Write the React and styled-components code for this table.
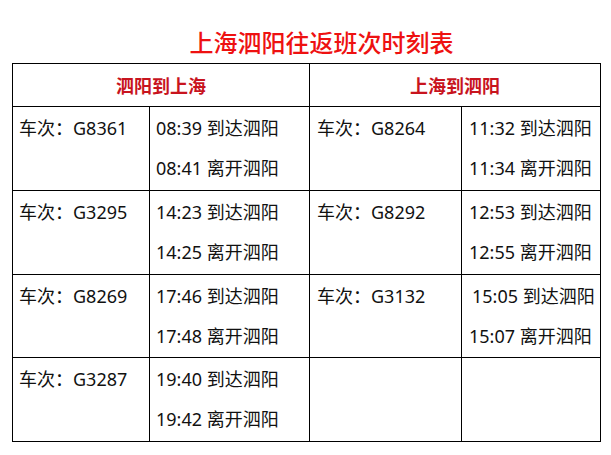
import React from "react";
import styled, { createGlobalStyle } from "styled-components";

const Global = createGlobalStyle`
  html, body { margin: 0; padding: 0; background: #fff; }
  body { font-family: "Noto Sans", "Noto Sans CJK SC", sans-serif; }
`;

const Page = styled.div`
  width: 611px;
  height: 455px;
  background: #fff;
  padding-top: 27px;
  box-sizing: border-box;
`;

const Title = styled.h1`
  margin: 0 0 6px 0;
  padding-left: 32px;
  text-align: center;
  font-family: "Noto Sans CJK SC", sans-serif;
  font-size: 24px;
  line-height: 30px;
  font-weight: 500;
  color: #ee1111;
  letter-spacing: 0;
`;

const Table = styled.div`
  margin-left: 12px;
  display: grid;
  grid-template-columns: 137px 160px 152px 139px;
  grid-template-rows: 43px 84px 84px 83px 84px;
  width: 588px;
  border-top: 1px solid #000;
  border-left: 1px solid #000;
`;

const Cell = styled.div`
  border-right: 1px solid #000;
  border-bottom: 1px solid #000;
  box-sizing: border-box;
  padding: 1px 0 0 ${(p) => p.$pad || 6}px;
  font-size: 18px;
  line-height: 40px;
  color: #111;
  white-space: nowrap;
`;

const HeadCell = styled.div`
  grid-column: span 2;
  border-right: 1px solid #000;
  border-bottom: 1px solid #000;
  display: flex;
  align-items: center;
  justify-content: center;
  font-family: "Noto Sans CJK SC", sans-serif;
  font-size: 18px;
  font-weight: 700;
  color: #c8141e;
`;

const Line = styled.div`
  padding-left: ${(p) => p.$indent || 0}px;
`;

const left = [
  ["G8361", "08:39", "08:41"],
  ["G3295", "14:23", "14:25"],
  ["G8269", "17:46", "17:48"],
  ["G3287", "19:40", "19:42"],
];
const right = [
  ["G8264", "11:32", "11:34"],
  ["G8292", "12:53", "12:55"],
  ["G3132", "15:05", "15:07", 3],
  null,
];

export default function App() {
  return (
    <Page>
      <Global />
      <Title>上海泗阳往返班次时刻表</Title>
      <Table>
        <HeadCell>泗阳到上海</HeadCell>
        <HeadCell>上海到泗阳</HeadCell>
        {left.map((l, i) => {
          const r = right[i];
          return (
            <React.Fragment key={i}>
              <Cell>车次：{l[0]}</Cell>
              <Cell>
                <Line>{l[1]} 到达泗阳</Line>
                <Line>{l[2]} 离开泗阳</Line>
              </Cell>
              <Cell $pad={7}>{r ? `车次：${r[0]}` : ""}</Cell>
              <Cell $pad={7}>
                {r && (
                  <>
                    <Line $indent={r[3]}>{r[1]} 到达泗阳</Line>
                    <Line>{r[2]} 离开泗阳</Line>
                  </>
                )}
              </Cell>
            </React.Fragment>
          );
        })}
      </Table>
    </Page>
  );
}
